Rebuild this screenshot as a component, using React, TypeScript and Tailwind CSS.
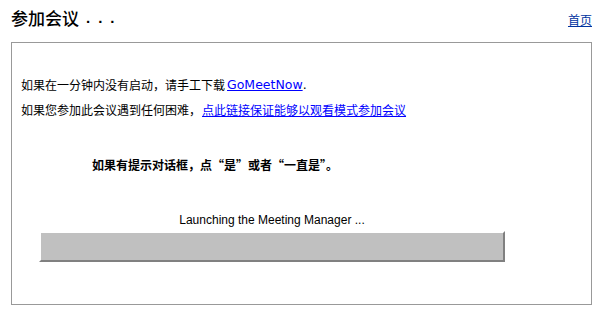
import React from "react";

const cn = '"Noto Sans CJK SC", "Liberation Sans", sans-serif';

export default function App() {
  return (
    <div className="w-[604px] h-[315px] bg-white text-black overflow-hidden" style={{ fontFamily: cn }}>
      <div className="pl-[11px] pr-[12px]">
        <div className="flex items-end justify-between h-[42px] pb-[14px]">
          <div className="flex items-end">
            <span className="text-[17px] leading-[20px] font-medium">参加会议</span>
            <span className="ml-[7px] mb-[1px] text-[15px] leading-[18px] font-bold tracking-[8px] font-['Liberation_Sans']">...</span>
          </div>
          <a href="#" className="text-[12px] leading-[14px] text-[#0033a0] underline mb-[1px]">首页</a>
        </div>
        <div className="border border-[#999999] h-[263px] pl-[9px]">
          <div className="mt-[34px] h-[16px] flex items-center text-[12px] leading-[16px]">
            <span>如果在一分钟内没有启动，请手工下载</span>
            <a href="#" className="ml-[2px] text-[#0000ff] underline font-['DejaVu_Sans'] text-[12.5px]">GoMeetNow</a>
            <span className="font-['DejaVu_Sans'] text-[12.5px]">.</span>
          </div>
          <div className="mt-[9px] h-[16px] flex items-center text-[12px] leading-[16px]">
            <span>如果您参加此会议遇到任何困难，</span>
            <a href="#" className="ml-[1px] text-[#0000ff] underline">点此链接保证能够以观看模式参加会议</a>
          </div>
          <div className="mt-[39px] h-[16px] pl-[71px] text-[12px] leading-[16px] font-bold">
            如果有提示对话框，点“是”或者“一直是”。
          </div>
          <div className="ml-[18px] w-[466px]">
            <div className="mt-[39px] h-[16px] text-center text-[12px] leading-[16px] font-['Liberation_Sans']">
              Launching the Meeting Manager ...
            </div>
            <div className="mt-[3px] h-[31px] bg-[#c0c0c0] border-2 border-t-white border-l-white border-r-[#808080] border-b-[#808080]" />
          </div>
        </div>
      </div>
    </div>
  );
}
